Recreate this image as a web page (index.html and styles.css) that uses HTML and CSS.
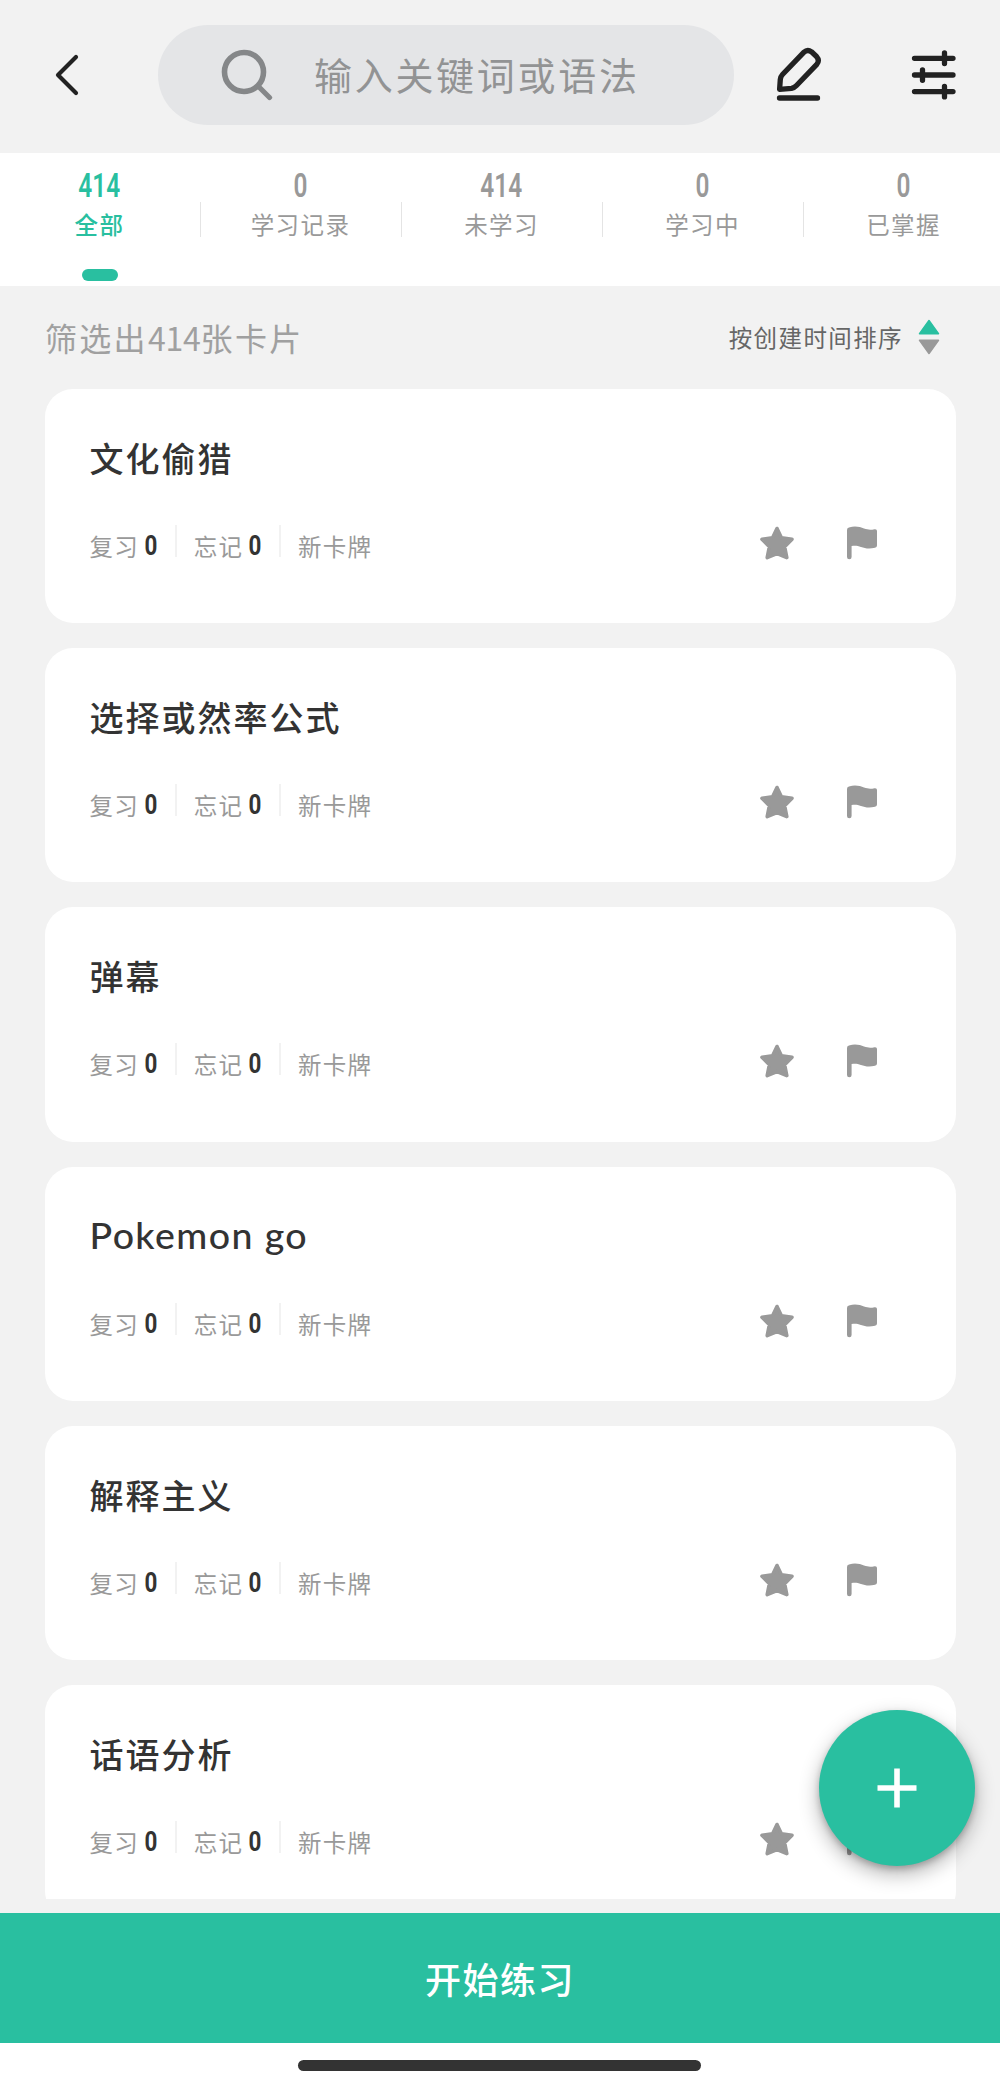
FILE: index.html
```html
<!DOCTYPE html>
<html lang="zh-CN">
<head>
    <meta charset="UTF-8">
    <meta name="viewport" content="width=device-width, initial-scale=1.0">
    <title>卡片列表</title>
    <link rel="stylesheet" href="styles.css">
</head>
<body>
    <!-- shared icons -->
    <svg class="sprite">
        <symbol id="star" viewBox="0 0 36 34">
            <path d="M18 2.500 L22.400 11.800 L33 13.300 L25.600 20.700 L27.800 31.600 L18 27.600 L8.200 31.600 L10.400 20.700 L3 13.300 L13.600 11.800 Z" fill="currentColor" stroke="currentColor" stroke-width="3.600" stroke-linejoin="round"/>
        </symbol>
        <symbol id="flag" viewBox="0 0 32 34">
            <path d="M1 4 Q1 2 3 1.6 C9 -.4 14 1 18 2.6 C22 4 25 4 28.5 3.2 Q31 2.8 31 5 V19.5 Q31 21.3 29 21.8 C23 23.3 19 22.4 15 21 C11.500 19.600 9 19.300 5.600 20 V31 Q5.600 33.300 3.300 33.300 Q1 33.300 1 31 Z" fill="currentColor"/>
        </symbol>
    </svg>

    <div id="app">
        <header class="topbar">
            <svg class="back" width="26" height="44" viewBox="0 0 26 44"><path d="M22 4 L4 22 L22 40" fill="none" stroke="#222" stroke-width="4.200" stroke-linecap="round" stroke-linejoin="round"/></svg>
            <div class="search">
                <svg width="52" height="52" viewBox="0 0 52 52" fill="none" stroke="#858789" stroke-linecap="round"><circle cx="23" cy="23" r="19.500" stroke-width="5.600"/><path d="M38 38 L48.500 48.500" stroke-width="5.200"/></svg>
                <span class="placeholder">输入关键词或语法</span>
            </div>
            <svg class="edit" width="46" height="54" viewBox="0 0 46 54" fill="none" stroke="#222" stroke-width="5.300" stroke-linecap="round" stroke-linejoin="round"><path d="M3.600 42.300 L4.300 32.500 Q4.600 29.500 6.500 27.500 L28 5.200 Q31.500 1.800 35.500 4.800 L40.500 9.500 Q44 13.500 40.800 17.300 L20.500 38.500 Q18.500 40.700 15.500 41.300 Z"/><path d="M3.500 51 H41.500"/></svg>
            <svg class="filter" width="46" height="50" viewBox="0 0 46 50" fill="none" stroke="#222" stroke-width="5.300" stroke-linecap="round"><path d="M3.500 8.300 H42 M3.500 25 H42 M3.500 41.600 H42 M33.500 3 V13.500 M11.500 19.800 V30.300 M33.500 36.400 V46.900"/></svg>
        </header>

        <nav class="tabs">
            <div class="tab active"><span class="num">414</span><span class="label">全部</span></div>
            <div class="tab"><span class="num">0</span><span class="label">学习记录</span></div>
            <div class="tab"><span class="num">414</span><span class="label">未学习</span></div>
            <div class="tab"><span class="num">0</span><span class="label">学习中</span></div>
            <div class="tab"><span class="num">0</span><span class="label">已掌握</span></div>
        </nav>

        <div class="summary">
            <p class="total">筛选出<span>414</span>张卡片</p>
            <div class="sort">
                <span>按创建时间排序</span>
                <svg width="22" height="36" viewBox="0 0 22 36"><path d="M11 1.500 L20.500 14.700 H1.500 Z" fill="#29bfa0" stroke="#29bfa0" stroke-width="1.500" stroke-linejoin="round"/><path d="M11 34.500 L20.500 21.300 H1.500 Z" fill="#999" stroke="#999" stroke-width="1.500" stroke-linejoin="round"/></svg>
            </div>
        </div>

        <main class="list">
            <div class="card">
                <h2>文化偷猎</h2>
                <div class="row">
                    <div class="meta"><span>复习<b>0</b></span><span>忘记<b>0</b></span><span>新卡牌</span></div>
                    <div class="marks"><svg class="star"><use href="#star"/></svg><svg class="flag"><use href="#flag"/></svg></div>
                </div>
            </div>
            <div class="card">
                <h2>选择或然率公式</h2>
                <div class="row">
                    <div class="meta"><span>复习<b>0</b></span><span>忘记<b>0</b></span><span>新卡牌</span></div>
                    <div class="marks"><svg class="star"><use href="#star"/></svg><svg class="flag"><use href="#flag"/></svg></div>
                </div>
            </div>
            <div class="card">
                <h2>弹幕</h2>
                <div class="row">
                    <div class="meta"><span>复习<b>0</b></span><span>忘记<b>0</b></span><span>新卡牌</span></div>
                    <div class="marks"><svg class="star"><use href="#star"/></svg><svg class="flag"><use href="#flag"/></svg></div>
                </div>
            </div>
            <div class="card">
                <h2 class="latin">Pokemon go</h2>
                <div class="row">
                    <div class="meta"><span>复习<b>0</b></span><span>忘记<b>0</b></span><span>新卡牌</span></div>
                    <div class="marks"><svg class="star"><use href="#star"/></svg><svg class="flag"><use href="#flag"/></svg></div>
                </div>
            </div>
            <div class="card">
                <h2>解释主义</h2>
                <div class="row">
                    <div class="meta"><span>复习<b>0</b></span><span>忘记<b>0</b></span><span>新卡牌</span></div>
                    <div class="marks"><svg class="star"><use href="#star"/></svg><svg class="flag"><use href="#flag"/></svg></div>
                </div>
            </div>
            <div class="card">
                <h2>话语分析</h2>
                <div class="row">
                    <div class="meta"><span>复习<b>0</b></span><span>忘记<b>0</b></span><span>新卡牌</span></div>
                    <div class="marks"><svg class="star"><use href="#star"/></svg><svg class="flag"><use href="#flag"/></svg></div>
                </div>
            </div>
        </main>

        <button class="start">开始练习</button>
        <div class="home"><i></i></div>

        <button class="add"><svg width="40" height="40" viewBox="0 0 40 40"><path d="M20 .5 V39.500 M.5 20 H39.500" stroke="#fff" stroke-width="5.600"/></svg></button>
    </div>
</body>
</html>
```
FILE: styles.css
```css
* {
    box-sizing: border-box;
    margin: 0;
    padding: 0;
}
body {
    font-family: "Noto Sans CJK SC", sans-serif;
    background-color: #f2f2f2;
}
button {
    border: none;
    font-family: inherit;
}
svg {
    display: block;
    flex: none;
}
.sprite {
    position: absolute;
    width: 0;
    height: 0;
}
#app {
    position: relative;
    display: flex;
    flex-direction: column;
    width: 1000px;
    height: 2088px;
    overflow: hidden;
}

/* top bar */
.topbar {
    display: flex;
    align-items: center;
    height: 153px;
    padding: 0 43px 3px 54px;
}
.search {
    display: flex;
    align-items: center;
    width: 576px;
    height: 100px;
    margin-left: 78px;
    padding-left: 63px;
    border-radius: 50px;
    background-color: #e4e5e7;
}
.placeholder {
    margin-left: 41px;
    padding-bottom: 4px;
    font-size: 38px;
    letter-spacing: 2.7px;
    color: #929394;
}
.edit {
    margin-left: 42px;
    margin-top: -3px;
}
.filter {
    margin-left: auto;
}

/* tabs */
.tabs {
    display: flex;
    height: 133px;
    background-color: #fff;
    overflow: hidden;
}
.tab {
    position: relative;
    display: flex;
    flex: 0 0 201px;
    flex-direction: column;
    align-items: center;
    padding-top: 16px;
    padding-right: 2px;
    color: #999;
}
.tab:not(:last-child)::after {
    content: "";
    position: absolute;
    top: 49px;
    right: 0;
    width: 1px;
    height: 35px;
    background-color: #e4e4e4;
}
.num {
    font-family: Roboto, sans-serif;
    font-size: 33px;
    font-weight: 600;
    line-height: 34px;
    transform: scaleX(0.74);
}
.label {
    font-size: 23.5px;
    line-height: 34px;
    margin-top: 4px;
    letter-spacing: 1.4px;
}
.active {
    color: #29bfa0;
}
.active .label {
    font-weight: 500;
}
.active::before {
    content: "";
    position: absolute;
    top: 116px;
    width: 36px;
    height: 12px;
    border-radius: 6px;
    background-color: #29bfa0;
}

/* summary line */
.summary {
    display: flex;
    align-items: center;
    justify-content: space-between;
    height: 103px;
    padding: 0 60px 2px 45px;
}
.total {
    font-size: 32px;
    letter-spacing: 2.3px;
    color: #a0a0a0;
}
.total span {
    letter-spacing: -0.2px;
}
.sort {
    display: flex;
    align-items: center;
    gap: 15px;
    font-size: 23.5px;
    letter-spacing: 1.4px;
    color: #666;
}

/* cards */
.list {
    display: flex;
    flex-direction: column;
    gap: 25px;
    height: 1510px;
    margin: 0 44.500px;
    overflow: hidden;
}
.card {
    flex: none;
    height: 234.200px;
    padding: 44px 77.500px 0 45px;
    border-radius: 28px;
    background-color: #fff;
}
h2 {
    height: 50px;
    font-size: 34px;
    font-weight: 500;
    line-height: 50px;
    letter-spacing: 2px;
    color: #333;
}
.latin {
    font-family: Lato, sans-serif;
    font-size: 37.5px;
    line-height: 48px;
    letter-spacing: 1.4px;
}
.row {
    display: flex;
    align-items: center;
    justify-content: space-between;
    height: 36px;
    margin-top: 42px;
}
.meta {
    display: flex;
    align-items: center;
    padding-top: 6px;
    font-size: 23.5px;
    line-height: 36px;
    letter-spacing: 1.3px;
    color: #999;
}
.meta span {
    display: flex;
    align-items: center;
}
.meta span + span::before {
    content: "";
    width: 2px;
    height: 32px;
    margin: -10px 17px 0 15.500px;
    background-color: #f2f2f2;
}
.meta b {
    margin-left: 4px;
    font-family: Roboto, sans-serif;
    font-size: 28px;
    font-weight: 700;
    letter-spacing: 0;
    color: #333;
    transform: scaleX(0.8);
}
.marks {
    display: flex;
    align-items: center;
    gap: 51.500px;
    color: #999;
}
.star {
    width: 36px;
    height: 34px;
}
.flag {
    width: 32px;
    height: 34px;
}

/* bottom */
.start {
    height: 130px;
    margin-top: 14px;
    background-color: #29bfa0;
    color: #fff;
    font-size: 36px;
    font-weight: 500;
    letter-spacing: 1.500px;
}
.home {
    display: flex;
    justify-content: center;
    height: 45px;
    padding: 17px 1px 0 0;
    background-color: #fff;
}
.home i {
    width: 403px;
    height: 11px;
    border-radius: 6px;
    background-color: #333;
}
.add {
    position: absolute;
    top: 1710px;
    left: 819px;
    display: flex;
    align-items: center;
    justify-content: center;
    width: 156px;
    height: 156px;
    border-radius: 50%;
    background-color: #29bfa0;
    box-shadow: 0 8px 20px rgba(0, 0, 0, 0.3), 0 3px 6px rgba(0, 0, 0, 0.2);
}
```
